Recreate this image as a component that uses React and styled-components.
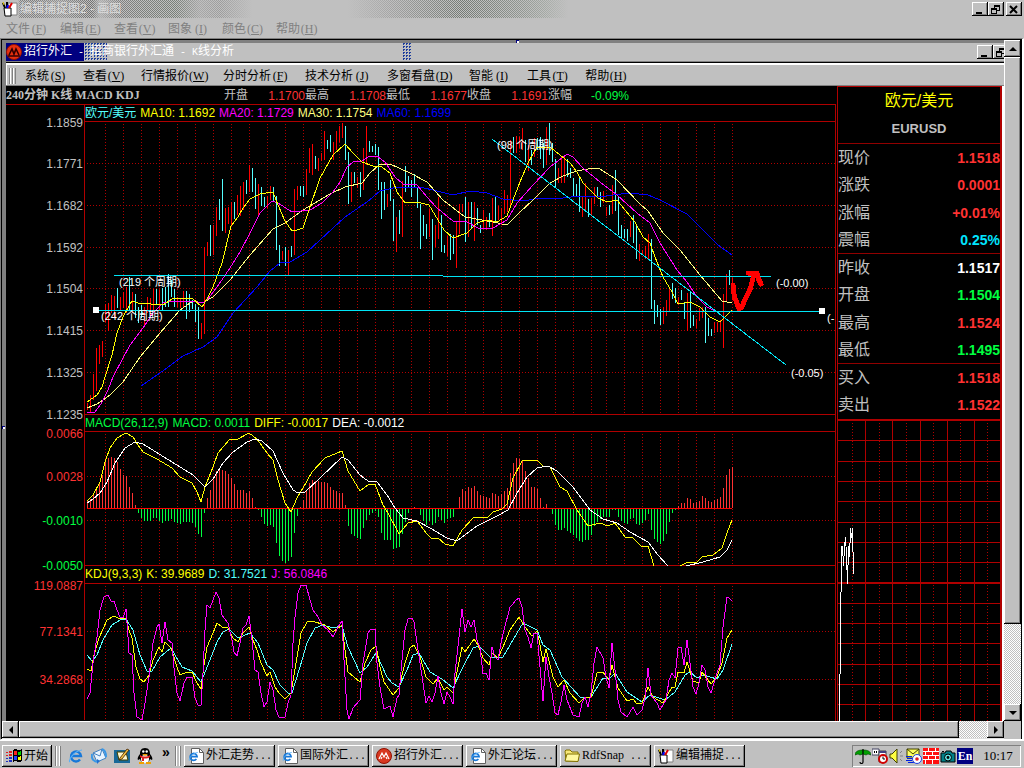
import styled, { createGlobalStyle, css } from "styled-components";

const GRID = "#b00000";

// one entry per candle: colour, high, low (r = rising, c = falling)
const candles = `r403-410 r395-413 r374-400 r348-391 r345-364 r341-357 r304-322 r303-331 r295-313 r296-317
c288-308 r297-310 r292-308 r287-313 c277-310 r292-313 c294-318 c307-323 c305-318 r307-325
r297-313 r298-317 r289-310 c289-305 r290-310 c288-310 c287-307 c274-307 c280-297 c289-307
r297-307 r299-308 r291-307 c291-319 c294-312 c300-309 c304-322 c307-339 r323-339 r247-334
r242-256 c225-256 r225-255 r207-236 c199-220 c179-231 r208-233 r207-224 r202-225 c202-219
r195-215 r186-216 r182-210 c180-194 r165-192 c168-192 c178-209 r184-215 c187-206 c197-207
r196-208 r186-200 c187-202 c196-250 c245-266 r251-260 c247-266 r250-275 c246-257 r189-255
r186-200 c186-196 c186-197 r169-195 r148-173 r144-175 c156-169 r158-171 r153-161 r131-160
c140-149 c135-152 r142-160 r131-150 r126-142 r123-138 c126-160 c152-204 r172-202 c172-183
r177-188 c172-197 r148-190 r126-165 c141-152 c146-152 c144-155 c147-190 c182-219 c182-210
r194-207 c180-201 c199-241 r217-252 c210-234 r181-237 c166-192 c176-187 c180-197 c174-188
c188-208 c204-249 c215-236 c224-239 r209-237 c219-260 r225-247 r197-239 c215-252 c245-253
r236-256 c234-260 c235-254 r221-268 r204-234 r204-212 c197-242 r202-237 c202-228 r202-241
c208-225 c225-233 r210-229 r217-230 c213-227 r198-236 c197-223 r206-220 r208-225 r190-214
r195-212 r140-207 c137-153 r136-153 r137-148 r128-150 c140-162 r145-171 c150-165 r138-157
c138-150 c137-159 c143-168 r127-165 c123-155 c143-162 c159-188 r168-183 r157-183 r155-183
c159-177 c168-178 c178-197 c184-196 c177-212 r196-217 r183-212 c199-217 r198-215 r187-204
c187-197 c192-207 r191-203 r207-216 c205-215 r185-214 c170-211 c197-235 c225-239 c229-238
c229-241 r221-237 c215-243 c225-259 r244-261 r250-255 r246-259 r234-259 c239-309 c300-324
c305-317 c309-325 r307-324 r300-316 r289-312 c283-299 c288-303 r297-305 c290-300 c302-319
r293-331 c292-328 c315-326 r319-328 r308-321 r307-318 c307-343 c318-336 c329-336 r322-333
r322-332 r320-332 r294-348 r274-302 c270-285 r278-300`
  .split(/\s+/)
  .map((c) => {
    const [high, low] = c.slice(1).split("-").map(Number);
    return { up: c[0] === "r", high, low };
  });

const macdBars = [
  7, 9, 14, 20, 26, 33, 48, 50, 51, 50, 46, 39, 33, 32, 21, 15, 3, -4, -9, -12, -12, -12, -9, -9, -12, -14, -12, -12,
  -10, -13, -14, -15, -13, -13, -13, -14, -18, -25, -28, -4, 10, 18, 28, 37, 39, 38, 37, 34, 30, 24, 18, 18, 18, 15,
  17, 10, 1, -1, -8, -15, -17, -16, -18, -34, -47, -52, -54, -52, -48, -24, -7, 1, 8, 17, 25, 28, 27, 27, 26, 26, 25,
  21, 18, 17, 15, 15, 3, -17, -25, -27, -29, -30, -19, -11, -6, -4, -2, -8, -24, -31, -31, -31, -40, -39, -38, -25,
  -13, -4, 0, 1, 0, -6, -12, -16, -12, -16, -14, -8, -11, -14, -10, -9, -8, 0, 11, 19, 17, 21, 20, 22, 17, 13, 12, 11,
  10, 15, 14, 12, 14, 17, 20, 35, 45, 50, 49, 47, 37, 30, 21, 21, 19, 10, 1, 4, 0, -5, -16, -21, -21, -19, -22, -24,
  -26, -29, -32, -33, -31, -31, -26, -17, -13, -10, -8, -8, -8, -1, -1, -8, -12, -14, -15, -10, -9, -15, -16, -14,
  -11, -5, -21, -30, -33, -35, -32, -25, -13, -4, -1, 2, 5, 5, 10, 9, 5, 6, 7, 12, 10, 7, 6, 8, 9, 11, 20, 33, 39, 41,
];

const priceLines = [
  {
    color: "#0000ff",
    points:
      "141,386 160,373 183,356 203,347 217,337 233,313 257,287 270,271 280,263 290,262 307,252 320,240 345,217 367,202 380,191 393,188 420,187 437,191 453,195 470,191 487,193 503,199 523,201 540,198 563,198 580,196 600,197 613,195 630,193 648,195 660,200 687,214 703,230 718,245 732,255",
  },
  {
    color: "#ffff80",
    points:
      "87,408 97,404 103,400 110,395 123,382 140,357 160,333 180,310 193,301 202,303 213,297 230,280 250,255 273,229 285,223 303,210 330,194 345,187 362,183 370,173 380,164 390,164 410,173 427,182 443,200 465,217 493,222 507,225 520,212 533,200 550,183 563,176 577,171 593,168 600,169 617,180 640,204 648,211 663,233 680,250 700,275 722,301 732,303",
  },
  {
    color: "#ff00ff",
    points:
      "87,413 95,412 101,404 108,390 113,377 123,358 130,345 143,328 153,313 163,303 172,301 193,301 202,303 207,300 217,287 230,268 240,252 250,233 260,213 272,201 278,203 292,212 310,210 322,203 333,192 340,182 347,167 353,162 362,161 368,157 377,156 385,162 395,177 403,184 417,185 427,197 437,208 453,221 467,222 480,229 493,228 507,220 517,203 533,185 550,167 567,154 573,157 583,168 600,182 617,195 637,213 650,223 660,243 677,270 687,282 697,297 707,307 717,312 732,311",
  },
  {
    color: "#ffff00",
    points:
      "87,402 97,395 102,387 105,377 112,355 117,333 123,317 130,304 132,301 138,303 163,305 172,299 178,298 192,298 202,307 207,299 213,287 222,263 231,226 238,217 243,208 250,199 260,194 273,192 278,205 285,221 292,231 297,230 303,228 309,210 320,178 333,155 345,144 353,153 362,162 373,166 382,167 390,173 397,192 405,203 417,202 429,205 435,215 444,230 453,238 467,233 477,223 487,220 497,222 507,216 513,200 520,182 528,163 537,147 550,147 560,155 570,163 577,172 583,183 591,191 598,198 607,202 617,200 625,210 635,222 643,237 650,243 655,257 663,277 672,292 678,304 690,302 700,307 710,317 720,322 725,317 732,310",
  },
];

const macdLines = [
  {
    color: "#ffff00",
    points:
      "87,501 93,495 100,482 105,462 110,448 117,438 126,433 133,437 138,445 143,452 157,459 172,468 180,477 192,483 197,492 201,502 205,487 213,467 218,453 230,439 238,439 249,433 257,439 267,453 273,460 278,480 285,503 291,512 297,498 303,488 312,472 325,458 342,451 348,471 360,491 368,485 375,484 383,505 388,513 399,534 408,523 417,521 427,534 432,539 438,538 445,544 453,546 462,530 474,517 487,518 493,512 502,509 507,504 513,478 522,461 537,460 543,466 550,467 560,487 567,491 577,510 588,526 600,523 608,526 615,523 625,537 633,538 642,547 648,546 654,566",
  },
  { color: "#ffff00", points: "680,566 688,562 697,562 702,557 713,555 722,548 727,533 732,520" },
  {
    color: "#ffffff",
    points:
      "87,503 93,499 100,493 107,482 115,463 125,448 135,442 143,444 172,462 193,475 205,487 213,479 223,463 233,452 247,442 255,439 262,441 273,451 283,473 293,490 298,493 305,492 320,478 342,457 348,460 360,475 368,481 377,482 387,495 395,508 403,518 417,521 430,528 447,538 457,541 477,526 497,516 508,510 517,493 527,477 537,468 548,466 557,471 573,487 590,510 603,519 617,523 630,532 648,542 658,555 668,566",
  },
  { color: "#ffffff", points: "686,566 703,562 720,557 727,550 732,540" },
];

const kdjLines = [
  {
    color: "#54ffff",
    points:
      "87,655 92,661 97,655 103,640 112,625 120,620 126,619 133,630 140,655 147,671 152,671 160,657 171,648 182,667 192,671 201,682 208,665 217,642 223,632 229,629 238,638 250,633 258,643 267,665 273,670 280,685 288,693 292,693 300,667 307,643 315,628 323,625 333,628 342,626 348,647 360,673 367,667 376,653 387,677 392,683 399,687 407,670 413,655 419,653 430,672 442,679 453,688 463,667 473,648 479,646 490,657 503,657 517,633 523,623 537,630 543,645 550,650 562,677 580,697 591,697 603,678 609,679 615,673 627,692 642,702 650,695 665,700 675,692 685,675 690,672 697,678 703,675 717,679 723,670 732,644",
  },
  {
    color: "#ffff00",
    points:
      "87,669 91,671 94,655 99,638 107,620 114,616 120,619 126,618 129,630 132,638 136,667 140,679 144,682 149,675 153,660 159,647 162,652 165,642 171,648 177,667 180,675 187,672 192,672 197,683 201,689 204,665 207,647 213,633 217,623 222,627 228,628 233,638 238,642 243,633 249,627 253,640 257,650 261,663 267,676 270,672 275,687 279,693 285,699 291,693 297,657 301,633 307,622 312,621 325,625 333,632 342,625 345,650 348,672 360,682 365,663 371,650 376,646 380,667 384,682 393,695 399,688 405,663 410,648 414,645 420,657 426,677 433,684 438,678 444,690 447,687 453,693 458,667 462,647 465,652 474,639 478,645 483,658 489,665 492,653 498,658 503,647 510,630 519,617 525,627 532,636 537,631 540,645 543,662 546,649 553,677 558,687 564,680 570,693 579,703 585,697 591,697 597,673 603,672 609,680 612,665 618,688 627,701 633,699 637,704 642,703 648,687 653,697 663,703 672,687 675,687 678,672 684,673 687,662 693,681 699,683 702,672 711,684 717,677 722,663 727,638 732,630",
  },
  {
    color: "#ff00ff",
    points:
      "87,699 90,693 93,663 97,637 100,610 104,597 108,595 111,601 114,601 117,610 120,617 123,618 126,609 128,637 129,653 132,655 134,693 137,717 142,720 145,703 149,677 153,643 157,627 159,624 162,643 165,622 168,640 172,643 174,668 177,693 180,701 184,683 187,677 192,677 195,698 198,705 201,705 203,673 205,630 207,605 210,608 213,600 216,592 219,598 222,615 228,623 232,640 234,652 237,656 240,643 243,628 246,625 249,616 252,640 255,670 258,672 261,693 264,707 267,702 270,682 273,690 276,710 279,717 285,717 288,703 291,695 293,643 295,617 298,593 301,585 306,585 310,600 313,610 318,617 322,625 328,630 333,637 338,627 342,621 344,660 347,710 349,719 353,708 360,700 363,663 368,633 371,629 375,629 377,663 380,687 384,709 390,706 393,717 397,698 399,695 402,660 405,630 408,619 412,618 414,622 417,643 420,663 423,683 426,703 429,696 432,702 435,693 438,676 441,693 444,704 447,692 450,697 453,704 455,673 459,637 462,609 465,632 468,620 471,627 474,620 477,640 480,648 483,674 486,673 489,680 492,647 495,657 498,660 501,643 504,630 510,607 513,604 516,600 519,598 522,607 525,630 528,637 531,648 534,633 537,633 540,667 543,701 546,657 549,677 552,693 555,713 558,715 561,702 564,685 567,700 573,715 579,717 582,703 585,697 588,707 591,693 594,663 597,647 603,658 606,677 609,688 612,643 615,670 618,700 621,712 627,717 633,707 637,715 642,710 645,698 648,668 651,695 657,703 660,710 666,700 669,680 672,673 675,678 678,648 681,647 684,665 687,640 690,663 693,687 696,694 699,683 702,665 705,670 708,687 711,693 714,683 717,673 720,665 723,627 727,597 729,598 732,601",
  },
];

const gridX = [
  ...Array.from({ length: 28 }, (_, i) => 105 + i * 18),
  ...Array.from({ length: 8 }, (_, i) => 606 + i * 18),
];

const paintMenu = [["文件", "F"], ["编辑", "E"], ["查看", "V"], ["图象", "I"], ["颜色", "C"], ["帮助", "H"]];

const appMenu = [
  ["系统", "S"],
  ["查看", "V"],
  ["行情报价", "W"],
  ["分时分析", "F"],
  ["技术分析", "J"],
  ["多窗看盘", "D"],
  ["智能", "I"],
  ["工具", "T"],
  ["帮助", "H"],
];

const summary = [
  ["开盘", "1.1700"],
  ["最高", "1.1708"],
  ["最低", "1.1677"],
  ["收盘", "1.1691"],
  ["涨幅", "-0.09%"],
];

const RED = "#ff3232";
const GREEN = "#00ff40";

const quotes = [
  [
    ["现价", "1.1518", RED],
    ["涨跌", "0.0001", RED],
    ["涨幅", "+0.01%", RED],
    ["震幅", "0.25%", "#00e5ff"],
  ],
  [
    ["昨收", "1.1517", "#ffffff"],
    ["开盘", "1.1504", GREEN],
    ["最高", "1.1524", RED],
    ["最低", "1.1495", GREEN],
  ],
  [
    ["买入", "1.1518", RED],
    ["卖出", "1.1522", RED],
  ],
];

function Plot({ top, height, grow, labels, rows, lines, children }) {
  return (
    <PlotSvg $height={height} $grow={grow}>
      <g transform={`translate(-6 ${-top})`} shapeRendering="crispEdges">
        <g stroke={GRID} fill="none">
          {gridX.map((x) => (
            <path key={x} d={`M${x}.5 ${top + 3}V${top + height - 1}`} strokeDasharray="1 2" />
          ))}
          {rows.map((y) => (
            <path key={y} d={`M87 ${y}.5H3000`} strokeDasharray="1 2" />
          ))}
          <path d={`M84 ${top}.5H3000`} />
          <path d={`M84.5 ${top}V${top + height}`} />
        </g>
        {children}
        {lines.map((l, i) => (
          <polyline key={i} points={l.points} fill="none" stroke={l.color} />
        ))}
        {labels.map(([text, y, color]) => (
          <AxisText key={text} x="83" y={y + 5} fill={color}>
            {text}
          </AxisText>
        ))}
      </g>
    </PlotSvg>
  );
}

function PricePlot() {
  const silver = "#c0c0c0";
  return (
    <Plot
      top={121}
      height={294}
      rows={[163, 205, 247, 288, 330, 372]}
      lines={[]}
      labels={[
        ["1.1859", 122, silver],
        ["1.1771", 163, silver],
        ["1.1682", 205, silver],
        ["1.1592", 247, silver],
        ["1.1504", 288, silver],
        ["1.1415", 330, silver],
        ["1.1325", 372, silver],
        ["1.1235", 414, silver],
      ]}
    >
      <path d="M84 414.5H3000" stroke={GRID} />
      {candles.map((c, i) => (
        <rect
          key={i}
          x={87 + i * 3}
          y={c.high}
          width="1"
          height={c.low - c.high}
          fill={c.up ? "#ff0000" : "#54ffff"}
        />
      ))}
      {priceLines.map((l) => (
        <polyline key={l.color} points={l.points} fill="none" stroke={l.color} />
      ))}
      <g fill="none" stroke="#00e5f5">
        <path d="M114 275.5H443M443 276.5H771M96 310.5H460M460 311.5H822" />
        <path d="M492 139L786 365" />
      </g>
      <path d="M93 307h6v6h-6zM819 308h6v6h-6z" fill="#fff" />
      <path
        d="M733 285V290L735 298L739 309L742 307L745 299L750 290L753 278M748 273H757L758 278L761 284"
        fill="none"
        stroke="#ff0000"
        strokeWidth="5"
        strokeLinecap="round"
        strokeLinejoin="round"
      />
      <NoteText x="119" y="286">(219 个周期)</NoteText>
      <NoteText x="101" y="320">(242 个周期)</NoteText>
      <NoteText x="497" y="149">(98 个周期)</NoteText>
      <NoteText x="776" y="287">(-0.00)</NoteText>
      <NoteText x="791" y="377">(-0.05)</NoteText>
      <NoteText x="827" y="322">(-</NoteText>
    </Plot>
  );
}

function MacdPlot() {
  return (
    <Plot
      top={431}
      height={135}
      rows={[476, 520]}
      lines={macdLines}
      labels={[
        ["0.0066", 433, RED],
        ["0.0028", 476, RED],
        ["-0.0010", 520, GREEN],
        ["-0.0050", 565, GREEN],
      ]}
    >
      <path d="M84 565.5H3000" stroke={GRID} />
      {macdBars.map((v, i) => (
        <rect
          key={i}
          x={87 + i * 3}
          y={v > 0 ? 508 - v : 509}
          width="1"
          height={Math.abs(v)}
          fill={v > 0 ? RED : GREEN}
        />
      ))}
      <path d="M87 508.5H732" stroke="#ff0000" />
    </Plot>
  );
}

function KdjPlot() {
  return (
    <Plot
      top={583}
      height={137}
      grow
      rows={[631, 679]}
      lines={kdjLines}
      labels={[
        ["119.0887", 585, RED],
        ["77.1341", 631, RED],
        ["34.2868", 679, RED],
      ]}
    />
  );
}

function TickPlot() {
  return (
    <TickSvg>
      <g transform="translate(-838 -418)" fill="none" stroke={GRID} shapeRendering="crispEdges">
        {[439, 460, 480, 500, 521, 541, 561, 602, 622, 642, 663, 683, 703].map((y) => (
          <path key={y} d={`M838 ${y}.5H1001`} />
        ))}
        {[865, 892, 920, 947, 974].map((x) => (
          <path key={x} d={`M${x}.5 420V3000`} />
        ))}
        {[852, 879, 906, 933, 960, 987].map((x) => (
          <path key={x} d={`M${x}.5 422V3000`} strokeDasharray="1 2" />
        ))}
        <path d="M838 419H1001M838 582H1001" strokeWidth="2" />
        <path
          stroke="#fff"
          d="M839.5 720V673M840.5 673V591M841.5 591V545M842.5 545V555M843.5 555V565M844.5 541V555M845.5 536V545M846.5 546V569M847.5 564V583M848.5 545V564M849.5 542V556M850.5 527V542M851.5 532V537M852.5 527V551M853.5 551V573"
        />
      </g>
    </TickSvg>
  );
}

const PaintIcon = () => (
  <Icon viewBox="0 0 16 16">
    <path d="M6 2h9v12H8z" fill="#fff" stroke="#808080" />
    <path d="M2 7h7v8H3z" fill="#fff" stroke="#000" />
    <path d="M3 7L1 2M5 7V1" stroke="#000" strokeWidth="2" />
    <path d="M7 7l3-5" stroke="#e00000" strokeWidth="2" />
    <path d="M5 7l1-3" stroke="#0000ff" strokeWidth="2" />
    <path d="M1 1l1 3" stroke="#e0c000" />
  </Icon>
);

const BankIcon = () => (
  <Icon viewBox="0 0 16 16">
    <circle cx="8" cy="8" r="7.5" fill="#e83010" stroke="#901000" />
    <path d="M3 11l3-6 2 5 2-5 3 6M2 12h12" fill="none" stroke="#300" strokeWidth="1.6" />
  </Icon>
);

const BankTaskIcon = () => (
  <Icon viewBox="0 0 16 16">
    <circle cx="8" cy="8" r="7.5" fill="#d83820" stroke="#901000" />
    <path d="M3 11l3-6 2 4 2-4 3 6M5 11l1-2M10 9l1 2" fill="none" stroke="#fff" strokeWidth="1.2" />
  </Icon>
);

const IeMark = () => (
  <g fill="none">
    <path d="M12 11.5A5 5 0 1 1 13 8H4" stroke="#1878d8" strokeWidth="2.4" />
    <path d="M2 14C0 12 6 3 14 2" stroke="#58b0f8" strokeWidth="1.2" />
  </g>
);

const IeIcon = () => (
  <Icon viewBox="0 0 16 16">
    <IeMark />
  </Icon>
);

const IePageIcon = () => (
  <Icon viewBox="0 0 16 16">
    <path d="M3.5.5h8l4 4v11h-12z" fill="#fff" stroke="#606060" />
    <path d="M11.5.5v4h4" fill="none" stroke="#606060" />
    <g transform="translate(0 3) scale(.7)">
      <IeMark />
    </g>
  </Icon>
);

const MailIcon = () => (
  <Icon viewBox="0 0 16 16">
    <path d="M2 5l9-4 4 9-9 4z" fill="#e8f4ff" stroke="#4080c0" />
    <path d="M2 5l7 3 2-7" fill="none" stroke="#4080c0" />
    <path d="M1 6c-1 5 2 8 6 8M15 9c0-4-1-7-4-8" fill="none" stroke="#3898e8" strokeWidth="2" />
    <path d="M6 11v5l3-3z" fill="#2070d0" />
  </Icon>
);

const DesktopIcon = () => (
  <Icon viewBox="0 0 16 16">
    <path d="M0 2h16v13H0z" fill="#186898" />
    <path d="M3 4h9l2 8H5z" fill="#fff8d0" stroke="#404000" />
    <path d="M6 10l7-9 2 1-7 9-3 1z" fill="#f0c040" stroke="#402000" strokeWidth=".8" />
  </Icon>
);

const PenguinIcon = () => (
  <Icon viewBox="0 0 16 16">
    <path d="M8 0c4 0 5 3 5 6 2 2 3 5 2 6l-2-1c-1 5-9 5-10 0l-2 1c-1-1 0-4 2-6 0-3 1-6 5-6z" fill="#000" />
    <ellipse cx="8" cy="11" rx="4" ry="4" fill="#fff" />
    <path d="M3 7c3 2 7 2 10 0v2c-3 2-7 2-10 0zM5 9h2v4H5z" fill="#e02020" />
    <path d="M5 6h6l-3 2zM2 14h5v2H2zM9 14h5v2H9z" fill="#f0a000" />
    <circle cx="6.3" cy="3.5" r="1.2" fill="#fff" />
    <circle cx="9.7" cy="3.5" r="1.2" fill="#fff" />
  </Icon>
);

const FolderIcon = () => (
  <Icon viewBox="0 0 16 16">
    <path d="M1 3l1-1h4l2 2h6v9H2z" fill="#f8e878" stroke="#807000" />
    <path d="M1 13L3 6h12.5L14 13.5z" fill="#fff8a0" stroke="#807000" />
  </Icon>
);

const FlagIcon = () => (
  <Icon viewBox="0 0 16 16" shapeRendering="crispEdges">
    <path d="M7 2c3-2 5 1 9-1v12c-4 2-6-1-9 1z" fill="#000" />
    <path d="M8 3c1-1 2 0 3 0v4c-1 0-2-1-3 0z" fill="#ff2020" />
    <path d="M12 4c1 0 2 0 3-1v4c-1 1-2 0-3 0z" fill="#00d000" />
    <path d="M8 8c1-1 2 0 3 0v4c-1 0-2-1-3 0z" fill="#2040ff" />
    <path d="M12 9c1 0 2 0 3-1v4c-1 1-2 0-3 0z" fill="#ffff00" />
    <path d="M0 4h2v1H0zM3 3h3v2H3zM0 7h2v1H0zM3 6h3v2H3z" fill="#e02020" />
    <path d="M0 10h2v1H0zM3 9h3v2H3zM0 13h2v1H0zM3 12h3v2H3z" fill="#2030c0" />
  </Icon>
);

const UmbrellaIcon = () => (
  <Icon viewBox="0 0 16 16">
    <path d="M0 7c0-4 4-5 8-5s8 1 8 5l-3-1-2 1-3-1-3 1-2-1z" fill="#00a000" stroke="#004000" strokeWidth=".6" />
    <path d="M8 1v13c0 2-3 2-3 0" fill="none" stroke="#000" strokeWidth="1.2" />
  </Icon>
);

const SchedulerIcon = () => (
  <Icon viewBox="0 0 16 16">
    <path d="M0 1h7v6H0z" fill="#fff" stroke="#404060" />
    <path d="M2 3h1v2H2zM4 3h1v2H4z" fill="#000" />
    <path d="M7 3h7v11H7z" fill="#fff" stroke="#404040" />
    <path d="M7 3h7v2H7z" fill="#404080" />
    <circle cx="11" cy="11" r="4" fill="#fff" stroke="#d00000" strokeWidth="2" />
    <path d="M11 8.5V11h2" fill="none" stroke="#000" />
  </Icon>
);

const SpeakerIcon = () => (
  <Icon viewBox="0 0 16 16">
    <path d="M1 6h2l5-5v14l-5-5H1z" fill="#ffff40" stroke="#404000" />
    <path d="M11 5l2-2M11 8h3M11 11l2 2" stroke="#808080" />
  </Icon>
);

const MessengerIcon = () => (
  <Icon viewBox="0 0 16 16">
    <path d="M1 1h12v9H1z" fill="#ffff60" stroke="#404000" />
    <path d="M1 1l6 5 6-5" fill="none" stroke="#404000" />
    <path d="M0 8h6v1H0zM1 10h5v1H1zM0 12h6v1H0zM2 14h6v1H2z" fill="#0020e0" />
    <circle cx="11" cy="11" r="4.5" fill="#fff" stroke="#2040e0" />
    <circle cx="11" cy="11" r="1.8" fill="#e02020" />
  </Icon>
);

const WallIcon = () => (
  <Icon viewBox="0 0 16 16" shapeRendering="crispEdges">
    <path d="M0 0h16v16H0z" fill="#ff1010" />
    <path d="M0 3h16v1H0zM0 7h16v1H0zM0 11h16v1H0zM5 0h1v3H5zM12 0h1v3h-1zM2 4h1v3H2zM9 4h1v3H9zM5 8h1v3H5zM12 8h1v3h-1zM2 12h1v4H2zM9 12h1v4H9z" fill="#fff" />
  </Icon>
);

const CameraIcon = () => (
  <Icon viewBox="0 0 16 16">
    <path d="M1 5h4l1-2h5l1 2h3v9H1z" fill="#008088" stroke="#000" />
    <circle cx="8" cy="9.5" r="3.5" fill="#60e0e0" stroke="#000" />
    <circle cx="8" cy="9.5" r="1.4" fill="#000" />
    <path d="M2 3h2v1H2z" fill="#000" />
  </Icon>
);

const tasks = [
  [IePageIcon, "外汇走势", "..."],
  [IePageIcon, "国际外汇", "..."],
  [BankTaskIcon, "招行外汇", "..."],
  [IePageIcon, "外汇论坛", "..."],
  [FolderIcon, "", "RdfSnap", " ..."],
  [PaintIcon, "编辑捕捉", "..."],
];

function WindowButtons({ close }) {
  return (
    <Controls $tight={!close}>
      <ControlButton aria-label="最小化">
        <svg width="10" height="9"><path d="M1 7h6v2H1z" /></svg>
      </ControlButton>
      <ControlButton aria-label="还原">
        <svg width="10" height="9" fill="none" stroke="#000" shapeRendering="crispEdges">
          <path d="M3.5 5V.5h5v5H6M3 1.5h6M.5 3.5h5v5h-5zM0 4.5h6" />
        </svg>
      </ControlButton>
      {close && (
        <CloseButton aria-label="关闭">
          <svg width="10" height="9"><path d="M1 1l7 7M8 1L1 8" stroke="#000" strokeWidth="2" /></svg>
        </CloseButton>
      )}
    </Controls>
  );
}

const Arrow = ({ d }) => (
  <svg width="8" height="8"><path d={d} /></svg>
);

const MenuLabel = ({ name, hotkey }) => (
  <>
    {name}
    <Hotkey>
      (<u>{hotkey}</u>)
    </Hotkey>
  </>
);

const App = () => {
  return (
    <>
      <GlobalStyle />
      <Desktop>
        <PaintTitle>
          <PaintIcon />
          <PaintCaption>编辑捕捉图2 - 画图</PaintCaption>
          <WindowButtons close />
        </PaintTitle>
        <PaintMenu>
          {paintMenu.map(([name, hotkey]) => (
            <MenuButton key={name} $dim>
              <MenuLabel name={name} hotkey={hotkey} />
            </MenuButton>
          ))}
        </PaintMenu>

        <Frame>
          <Viewport>
            <TopHandle />
            <SideHandle />
            <InnerTitle>
              <InnerCaption>
                <BankIcon />
                <span>
                  招行外汇<Mono> - </Mono>招商银行外汇通<Mono> - K</Mono>线分析
                </span>
              </InnerCaption>
              <WindowButtons />
            </InnerTitle>
            <AppMenu>
              <Grip />
              {appMenu.map(([name, hotkey]) => (
                <MenuButton key={name}>
                  <MenuLabel name={name} hotkey={hotkey} />
                </MenuButton>
              ))}
            </AppMenu>
            <Workspace>
              <Charts>
                <ChartHeader>
                  <ChartName>240分钟 K线 MACD KDJ</ChartName>
                  {summary.map(([name, value]) => (
                    <SummaryItem key={name}>
                      <span>{name}</span>
                      <SummaryValue $down={value[0] === "-"}>{value}</SummaryValue>
                    </SummaryItem>
                  ))}
                </ChartHeader>
                <ChartStack>
                  <Legend>
                    <LegendItem $color="#54ffff">欧元/美元</LegendItem>
                    <LegendItem $color="#ffff00">MA10: 1.1692</LegendItem>
                    <LegendItem $color="#ff00ff">MA20: 1.1729</LegendItem>
                    <LegendItem $color="#ffff80">MA30: 1.1754</LegendItem>
                    <LegendItem $color="#0000ff">MA60: 1.1699</LegendItem>
                  </Legend>
                  <PricePlot />
                  <Legend>
                    <LegendItem $color={GREEN}>MACD(26,12,9)</LegendItem>
                    <LegendItem $color={GREEN}>MACD: 0.0011</LegendItem>
                    <LegendItem $color="#ffff00">DIFF: -0.0017</LegendItem>
                    <LegendItem $color="#ffffff">DEA: -0.0012</LegendItem>
                  </Legend>
                  <MacdPlot />
                  <Legend $tall>
                    <LegendItem $color="#ffff00">KDJ(9,3,3)</LegendItem>
                    <LegendItem $color="#ffff00">K: 39.9689</LegendItem>
                    <LegendItem $color="#54ffff">D: 31.7521</LegendItem>
                    <LegendItem $color="#ff00ff">J: 56.0846</LegendItem>
                  </Legend>
                  <KdjPlot />
                </ChartStack>
              </Charts>
              <QuotePanel>
                <PairName>欧元/美元</PairName>
                <PairCode>EURUSD</PairCode>
                <QuoteTable>
                  {quotes.map((section, i) => (
                    <tbody key={i}>
                      {section.map(([name, value, color]) => (
                        <tr key={name}>
                          <QuoteLabel scope="row">{name}</QuoteLabel>
                          <QuoteValue $color={color}>{value}</QuoteValue>
                        </tr>
                      ))}
                    </tbody>
                  ))}
                </QuoteTable>
                <TickPlot />
              </QuotePanel>
            </Workspace>
          </Viewport>
          <VScroll>
            <ScrollButton aria-label="向上滚动"><Arrow d="M0 6h8L4 2z" /></ScrollButton>
            <VThumb />
            <Track />
            <ScrollButton aria-label="向下滚动"><Arrow d="M0 2h8L4 6z" /></ScrollButton>
          </VScroll>
          <HScroll>
            <ScrollButton aria-label="向左滚动"><Arrow d="M6 0v8L2 4z" /></ScrollButton>
            <HThumb />
            <Track />
            <ScrollButton aria-label="向右滚动"><Arrow d="M2 0v8l4-4z" /></ScrollButton>
          </HScroll>
        </Frame>

        <Taskbar>
          <StartButton>
            <FlagIcon />
            开始
          </StartButton>
          <BarGrip />
          <QuickLaunch>
            <QuickButton aria-label="Internet Explorer"><IeIcon /></QuickButton>
            <QuickButton aria-label="Outlook Express"><MailIcon /></QuickButton>
            <QuickButton aria-label="显示桌面"><DesktopIcon /></QuickButton>
            <QuickButton aria-label="QQ"><PenguinIcon /></QuickButton>
            <More>»</More>
          </QuickLaunch>
          <BarGrip />
          <Tasks>
            {tasks.map(([TaskIcon, name, rest, dots]) => (
              <TaskButton key={name + rest}>
                <TaskIcon />
                <span>
                  {name}
                  {dots ? <Serif>{rest}</Serif> : <Mono>{rest}</Mono>}
                  <Mono>{dots}</Mono>
                </span>
              </TaskButton>
            ))}
          </Tasks>
          <Tray>
            <UmbrellaIcon />
            <SchedulerIcon />
            <SpeakerIcon />
            <MessengerIcon />
            <WallIcon />
            <CameraIcon />
            <Language>En</Language>
            <Clock>10:17</Clock>
          </Tray>
        </Taskbar>
      </Desktop>
    </>
  );
};

export default App;

const GlobalStyle = createGlobalStyle`
  * {
    box-sizing: border-box;
  }
  body {
    margin: 0;
    background: #c0c0c0;
    color: #000;
    font: 12px/16px "Liberation Sans", "Noto Sans CJK SC", sans-serif;
  }
  button {
    border: 0;
    padding: 0;
    background: none;
    color: inherit;
    font: inherit;
    white-space: nowrap;
  }
`;

const raised = css`
  background: #c0c0c0;
  box-shadow: inset -1px -1px #000, inset 1px 1px #fff, inset -2px -2px #808080;
`;

const Desktop = styled.div`
  display: flex;
  flex-direction: column;
  height: 100vh;
  overflow: hidden;
`;

const Icon = styled.svg`
  width: 16px;
  height: 16px;
  flex: none;
`;

const Mono = styled.span`
  font-family: "Liberation Mono", monospace;
  font-size: 10px;
  white-space: pre;
`;

const Serif = styled.span`
  font-family: "Liberation Serif", serif;
  font-size: 12px;
`;

const Hotkey = styled(Serif)`
  display: inline-block;
  width: 18px;
  text-align: center;
`;

const PaintTitle = styled.header`
  display: flex;
  align-items: center;
  height: 18px;
  padding: 0 2px;
  background:
    conic-gradient(#c0c0c0 25%, transparent 0 50%, #c0c0c0 0 75%, transparent 0) 0 0 / 2px 2px,
    linear-gradient(
      90deg,
      #c0c0c0 0 18px,
      #808080 20px 34px,
      #949494 60px,
      #707070 92px,
      #b0b0b0 100px,
      #808080 120px,
      #788078 176px,
      #a8a8a8 200px,
      #9c9c9c 220px,
      #c0c0c0 252px 348px,
      #a4a4a4 390px,
      #747a74 462px,
      #909690 520px,
      #a4aaa4 545px,
      #c0c0c0 568px
    );
`;

const PaintCaption = styled.span`
  flex: 1;
  margin-left: 2px;
  color: #dcdcdc;
  white-space: pre;
`;

const Controls = styled.div`
  display: flex;
  align-self: center;
  margin-right: ${(p) => (p.$tight ? "-5px" : "0")};
`;

const ControlButton = styled.button`
  ${raised}
  display: flex;
  align-items: center;
  justify-content: center;
  width: 16px;
  height: 14px;
`;

const CloseButton = styled(ControlButton)`
  margin-left: 2px;
`;

const PaintMenu = styled.nav`
  display: flex;
  align-items: center;
  gap: 12px;
  height: 20px;
  padding: 2px 0 0 6px;
`;

const MenuButton = styled.button`
  color: ${(p) => (p.$dim ? "#808080" : "#000")};
`;

const Frame = styled.main`
  flex: 1;
  min-height: 0;
  display: grid;
  grid-template: minmax(0, 1fr) 18px / minmax(0, 1fr) 17px;
  border-top: 1px solid #808080;
  border-left: 1px solid #808080;
  border-right: 2px solid #fff;
  border-bottom: 1px solid #fff;
  box-shadow: inset 1px 1px #000, inset -1px 0 #000;
  padding: 1px 1px 0 1px;
`;

const Viewport = styled.div`
  position: relative;
  display: flex;
  flex-direction: column;
  overflow: hidden;
  padding: 3px 0 0 4px;
  background: #808080;
`;

const handle = css`
  position: absolute;
  width: 3px;
  height: 3px;
  background: #fff;
  border: solid #000080;
  border-width: 1px 0 0 1px;
`;

const TopHandle = styled.i`
  ${handle}
  top: 0;
  left: 514px;
`;

const SideHandle = styled.i`
  ${handle}
  top: 386px;
  left: 0;
`;

const InnerTitle = styled.div`
  display: flex;
  align-items: center;
  justify-content: space-between;
  height: 19px;
  border-bottom: 1px solid #808080;
  background:
    linear-gradient(90deg, #000080 78px, transparent 0),
    linear-gradient(90deg, transparent 101px, #c0c0c0 0 396px, transparent 0 405px, #c0c0c0 0),
    conic-gradient(#1c3c9c 25%, #c0c0c0 0) 0 0 / 3px 3px;
`;

const InnerCaption = styled.h1`
  display: flex;
  align-items: center;
  gap: 2px;
  margin: 0;
  font: inherit;
  color: #fff;
  white-space: nowrap;
`;

const AppMenu = styled.nav`
  display: flex;
  align-items: center;
  gap: 16px;
  height: 24px;
  padding-top: 4px;
  border-top: 1px solid #000;
  border-bottom: 1px solid #808080;
  box-shadow: inset 1px 2px #fff;
  background: #c0c0c0;
`;

const Grip = styled.i`
  width: 7px;
  height: 16px;
  margin: 0 -7px 0 3px;
  border: solid #808080;
  border-width: 0 1px;
  background: linear-gradient(90deg, #fff 1px, #c0c0c0 0 2px, #808080 0 3px, #fff 0 4px, #c0c0c0 0);
`;

const Workspace = styled.div`
  flex: 1;
  min-height: 0;
  display: flex;
  background: #000;
  border-right: 2px solid #fff;
`;

const Charts = styled.section`
  flex: 1;
  min-width: 0;
  display: flex;
  flex-direction: column;
  margin-right: 1px;
  color: #c0c0c0;
`;

const ChartHeader = styled.div`
  display: flex;
  align-items: center;
  height: 18px;
  white-space: nowrap;
`;

const ChartName = styled.h2`
  width: 218px;
  margin: 0;
  font: bold 12px/16px "Liberation Serif", "Noto Sans CJK SC", serif;
`;

const SummaryItem = styled.div`
  display: flex;
  justify-content: space-between;
  width: 81px;
`;

const SummaryValue = styled.span`
  padding-top: 1px;
  color: ${(p) => (p.$down ? "#00ff40" : "#ff3232")};
`;

const ChartStack = styled.div`
  flex: 1;
  min-height: 0;
  display: flex;
  flex-direction: column;
  overflow: hidden;
  border: solid ${GRID};
  border-width: 1px 1px 0 0;
`;

const Legend = styled.div`
  display: flex;
  flex: none;
  gap: 4px;
  height: ${(p) => (p.$tall ? "17px" : "16px")};
  margin-left: 78px;
  border-left: 1px solid ${GRID};
  white-space: nowrap;
`;

const LegendItem = styled.span`
  color: ${(p) => p.$color};
`;

const PlotSvg = styled.svg`
  display: block;
  flex: ${(p) => (p.$grow ? "1 0 auto" : "none")};
  width: 100%;
  height: ${(p) => p.$height}px;
  overflow: visible;
`;

const AxisText = styled.text`
  font-size: 12px;
  text-anchor: end;
`;

const NoteText = styled.text`
  font-size: 11px;
  fill: #fff;
`;

const QuotePanel = styled.aside`
  flex: none;
  display: flex;
  flex-direction: column;
  width: 165px;
  min-height: 0;
  overflow: hidden;
  border: solid ${GRID};
  border-width: 1px 2px 0 1px;
  color: #c0c0c0;
`;

const PairName = styled.h2`
  margin: 0;
  font-size: 16px;
  font-weight: normal;
  line-height: 28px;
  text-align: center;
  color: #ffff00;
`;

const PairCode = styled.p`
  margin: 0;
  font-size: 13px;
  font-weight: bold;
  line-height: 28px;
  text-align: center;
`;

const QuoteTable = styled.table`
  width: 100%;
  border-collapse: collapse;
  line-height: 24px;

  tbody {
    border-top: 1px solid #900000;
  }
  tr {
    height: 28px;
  }
  tr:nth-child(even) {
    height: 27px;
  }
`;

const QuoteLabel = styled.th`
  padding: 0;
  font-size: 16px;
  font-weight: normal;
  text-align: left;
`;

const QuoteValue = styled.td`
  padding: 0;
  font-size: 14px;
  font-weight: bold;
  text-align: right;
  color: ${(p) => p.$color};
`;

const TickSvg = styled.svg`
  flex: 1;
  width: 100%;
  min-height: 0;
`;

const VScroll = styled.div`
  display: flex;
  flex-direction: column;
`;

const HScroll = styled.div`
  display: flex;
  border-bottom: 1px solid #dfdfdf;
`;

const ScrollButton = styled.button`
  ${raised}
  display: flex;
  flex: none;
  align-items: center;
  justify-content: center;
  width: 17px;
  height: 17px;
`;

const VThumb = styled.div`
  ${raised}
  flex: 566;
`;

const HThumb = styled.div`
  ${raised}
  flex: 940;
`;

const Track = styled.div`
  flex: 80;
  background: conic-gradient(#fff 25%, #c0c0c0 0 50%, #fff 0 75%, #c0c0c0 0) 0 0 / 2px 2px;

  ${HScroll} & {
    flex: 28;
  }
`;

const Taskbar = styled.footer`
  display: flex;
  align-items: center;
  height: 28px;
  padding: 3px 3px 1px 2px;
  border-top: 1px solid #fff;
  background: #c0c0c0;
`;

const StartButton = styled.button`
  ${raised}
  display: flex;
  align-items: center;
  gap: 2px;
  width: 50px;
  height: 22px;
  padding-left: 4px;
`;

const BarGrip = styled.i`
  width: 6px;
  height: 20px;
  margin: 0 3px;
  border-left: 1px solid #808080;
  background: linear-gradient(90deg, #fff 1px, #c0c0c0 0 3px, #fff 0 4px, #808080 0);
`;

const QuickLaunch = styled.div`
  display: flex;
  align-items: center;
  gap: 7px;
  width: 108px;
  padding-left: 4px;
`;

const QuickButton = styled.button`
  display: flex;
`;

const More = styled.span`
  align-self: flex-start;
  margin-left: 2px;
  font-weight: bold;
  font-size: 14px;
  line-height: 8px;
`;

const Tasks = styled.div`
  display: flex;
  flex: 1;
  gap: 3px;
  min-width: 0;
`;

const TaskButton = styled.button`
  ${raised}
  display: flex;
  align-items: center;
  gap: 2px;
  width: 91px;
  height: 22px;
  padding-left: 4px;
  overflow: hidden;
`;

const Tray = styled.div`
  display: flex;
  align-items: center;
  gap: 1px;
  height: 22px;
  padding: 0 8px 0 3px;
  box-shadow: inset 1px 1px #808080, inset -1px -1px #fff;
`;

const Language = styled.span`
  width: 16px;
  background: #000080;
  color: #fff;
  font: bold 12px/16px "Liberation Serif", serif;
  text-align: center;
`;

const Clock = styled(Serif)`
  width: 30px;
  margin-left: 9px;
  font-size: 13px;
  text-align: center;
`;
